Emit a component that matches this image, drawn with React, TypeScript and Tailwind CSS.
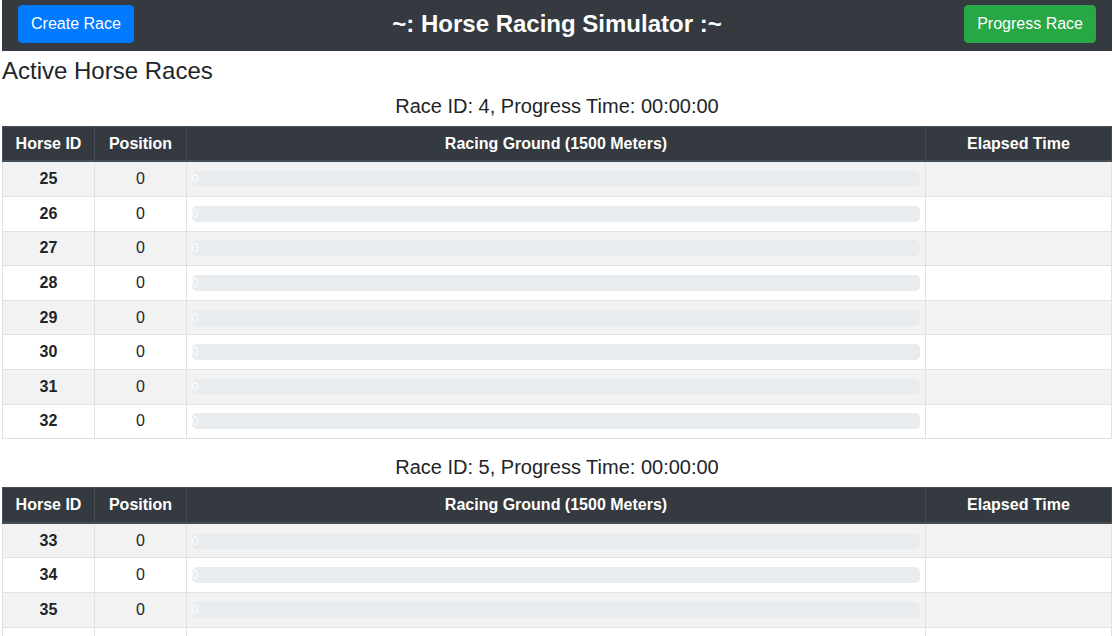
import React from 'react';

type Horse = {
  id: number;
  position: number;
  progress: number;
  elapsed: string;
};

type Race = {
  id: number;
  progressTime: string;
  horses: Horse[];
};

const makeHorses = (start: number): Horse[] =>
  Array.from({ length: 8 }, (_, i) => ({
    id: start + i,
    position: 0,
    progress: 0,
    elapsed: '',
  }));

const races: Race[] = [
  { id: 4, progressTime: '00:00:00', horses: makeHorses(25) },
  { id: 5, progressTime: '00:00:00', horses: makeHorses(33) },
];

const RaceTable: React.FC<{ race: Race }> = ({ race }) => {
  return (
    <div>
      <h5 className="text-center text-[20px] leading-[1.2] mb-2 font-normal">
        Race ID: {race.id}, Progress Time: {race.progressTime}
      </h5>
      <table className="w-full table-fixed border-collapse mb-4 text-base">
        <colgroup>
          <col className="w-[92px]" />
          <col className="w-[92px]" />
          <col />
          <col className="w-[186px]" />
        </colgroup>
        <thead>
          <tr className="bg-[#343a40] text-white">
            <th className="border border-[#454d55] border-b-2 py-[4.8px] px-[4.8px] leading-6 font-bold">Horse ID</th>
            <th className="border border-[#454d55] border-b-2 py-[4.8px] px-[4.8px] leading-6 font-bold">Position</th>
            <th className="border border-[#454d55] border-b-2 py-[4.8px] px-[4.8px] leading-6 font-bold">Racing Ground (1500 Meters)</th>
            <th className="border border-[#454d55] border-b-2 py-[4.8px] px-[4.8px] leading-6 font-bold">Elapsed Time</th>
          </tr>
        </thead>
        <tbody>
          {race.horses.map((horse, index) => (
            <tr key={horse.id} className={index % 2 === 0 ? 'bg-[#f2f2f2]' : 'bg-white'}>
              <td className="border border-[#dee2e6] py-[4.8px] px-[4.8px] leading-6 text-center font-bold">{horse.id}</td>
              <td className="border border-[#dee2e6] py-[4.8px] px-[4.8px] leading-6 text-center">{horse.position}</td>
              <td className="border border-[#dee2e6] py-[4.8px] px-[4.8px] leading-6">
                <div className="flex h-4 bg-[#e9ecef] rounded-[5px] overflow-hidden text-[12px] leading-4">
                  <div
                    className="bg-[#007bff] text-white whitespace-nowrap"
                    style={{ width: `${horse.progress}%` }}
                  >
                    {horse.progress}
                  </div>
                </div>
              </td>
              <td className="border border-[#dee2e6] py-[4.8px] px-[4.8px] leading-6 text-center">{horse.elapsed}</td>
            </tr>
          ))}
        </tbody>
      </table>
    </div>
  );
};

const App: React.FC = () => {
  return (
    <div className="min-h-screen bg-white pl-[2px] pr-[3px] text-[#212529] font-['Liberation_Sans',Arial,sans-serif]">
      {/* Header */}
      <header className="h-[51px] bg-[#343a40] grid grid-cols-[1fr_auto_1fr] items-start px-4 pt-[5px]">
        <div className="flex justify-start">
          <button className="h-[38px] px-3 rounded border border-[#007bff] bg-[#007bff] text-white text-base leading-6">
            Create Race
          </button>
        </div>
        <h1 className="text-white text-2xl font-bold leading-[38px]">~: Horse Racing Simulator :~</h1>
        <div className="flex justify-end">
          <button className="h-[38px] px-3 rounded border border-[#28a745] bg-[#28a745] text-white text-base leading-6">
            Progress Race
          </button>
        </div>
      </header>

      <main>
        <h4 className="text-2xl leading-[1.2] mt-[6px] mb-2 font-normal">Active Horse Races</h4>
        {races.map(race => (
          <RaceTable key={race.id} race={race} />
        ))}
      </main>
    </div>
  );
};

export default App;
